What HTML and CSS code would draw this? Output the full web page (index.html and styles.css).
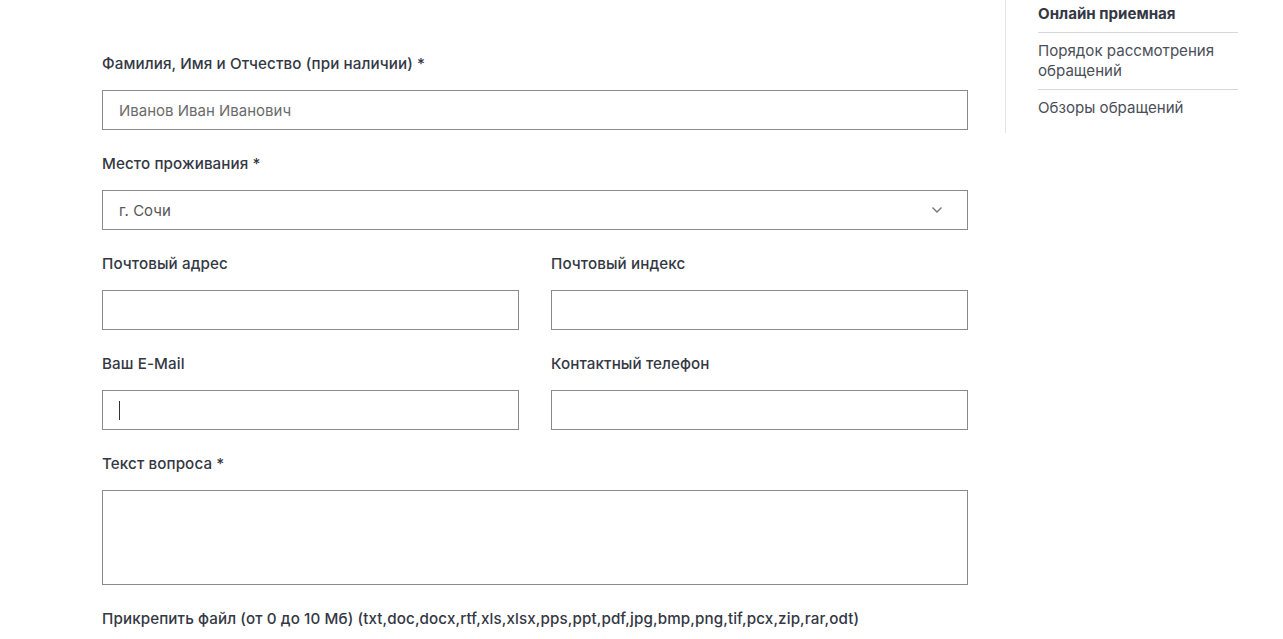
FILE: index.html
```html
<!DOCTYPE html>
<html lang="ru">
<head>
<meta charset="utf-8">
<title>Онлайн приемная</title>
<link rel="stylesheet" href="styles.css">
</head>
<body>
<div class="page">
  <main class="form">
    <div class="field">
      <div class="label">Фамилия, Имя и Отчество (при наличии) *</div>
      <div class="input"><span class="placeholder">Иванов Иван Иванович</span></div>
    </div>
    <div class="field">
      <div class="label">Место проживания *</div>
      <div class="input select"><span class="value">г. Сочи</span>
        <svg class="chev" width="12" height="8" viewBox="0 0 12 8"><path d="M1.5 1.5 L6 6 L10.5 1.5" fill="none" stroke="#777" stroke-width="1.4"/></svg>
      </div>
    </div>
    <div class="row">
      <div class="field">
        <div class="label">Почтовый адрес</div>
        <div class="input"></div>
      </div>
      <div class="field">
        <div class="label">Почтовый индекс</div>
        <div class="input"></div>
      </div>
    </div>
    <div class="row">
      <div class="field">
        <div class="label">Ваш E-Mail</div>
        <div class="input"><span class="caret"></span></div>
      </div>
      <div class="field">
        <div class="label">Контактный телефон</div>
        <div class="input"></div>
      </div>
    </div>
    <div class="field">
      <div class="label">Текст вопроса *</div>
      <div class="input textarea"></div>
    </div>
    <div class="field">
      <div class="label">Прикрепить файл (от 0 до 10 Мб) (txt,doc,docx,rtf,xls,xlsx,pps,ppt,pdf,jpg,bmp,png,tif,pcx,zip,rar,odt)</div>
    </div>
  </main>
  <aside class="side">
    <a class="item active">Онлайн приемная</a>
    <a class="item">Порядок рассмотрения обращений</a>
    <a class="item">Обзоры обращений</a>
  </aside>
</div>
</body>
</html>
```
FILE: styles.css
```css
html, body {
  margin: 0;
  padding: 0;
  background: #fff;
}
body {
  font-family: Inter, "Noto Sans", sans-serif;
  color: #343844;
  width: 1283px;
  height: 639px;
  overflow: hidden;
}
.page {
  display: flex;
  align-items: flex-start;
}
.form {
  width: 866px;
  margin-left: 102px;
  padding-top: 54px;
  display: flex;
  flex-direction: column;
}
.field {
  display: flex;
  flex-direction: column;
  margin-bottom: 24px;
}
.label {
  font-size: 15.2px;
  letter-spacing: 0.1px;
  font-weight: 500;
  line-height: 20px;
  margin-bottom: 16px;
  white-space: nowrap;
}
.row {
  display: grid;
  grid-template-columns: 1fr 1fr;
  column-gap: 32px;
}
.input {
  box-sizing: border-box;
  height: 40px;
  border: 1px solid #8a8a8a;
  display: flex;
  align-items: center;
  padding: 0 16px;
  font-size: 15px;
}
.placeholder {
  color: #6b6b6b;
}
.value {
  color: #555;
  flex: 1;
}
.chev {
  margin-right: 8px;
}
.caret {
  width: 1px;
  height: 19px;
  background: #333;
}
.textarea {
  height: 95px;
}
.side {
  margin-left: 37px;
  width: 200px;
  border-left: 1px solid #e3e3e3;
  padding: 4px 0 7px 32px;
  display: flex;
  flex-direction: column;
}
.item {
  font-size: 15.1px;
  line-height: 20px;
  padding: 8px 0;
  color: #4a4e58;
  border-bottom: 1px solid #d8d8d8;
}
.item:first-child {
  padding-top: 0;
}
.item:last-child {
  border-bottom: none;
}
.item.active {
  font-weight: 700;
  color: #343844;
}
```
